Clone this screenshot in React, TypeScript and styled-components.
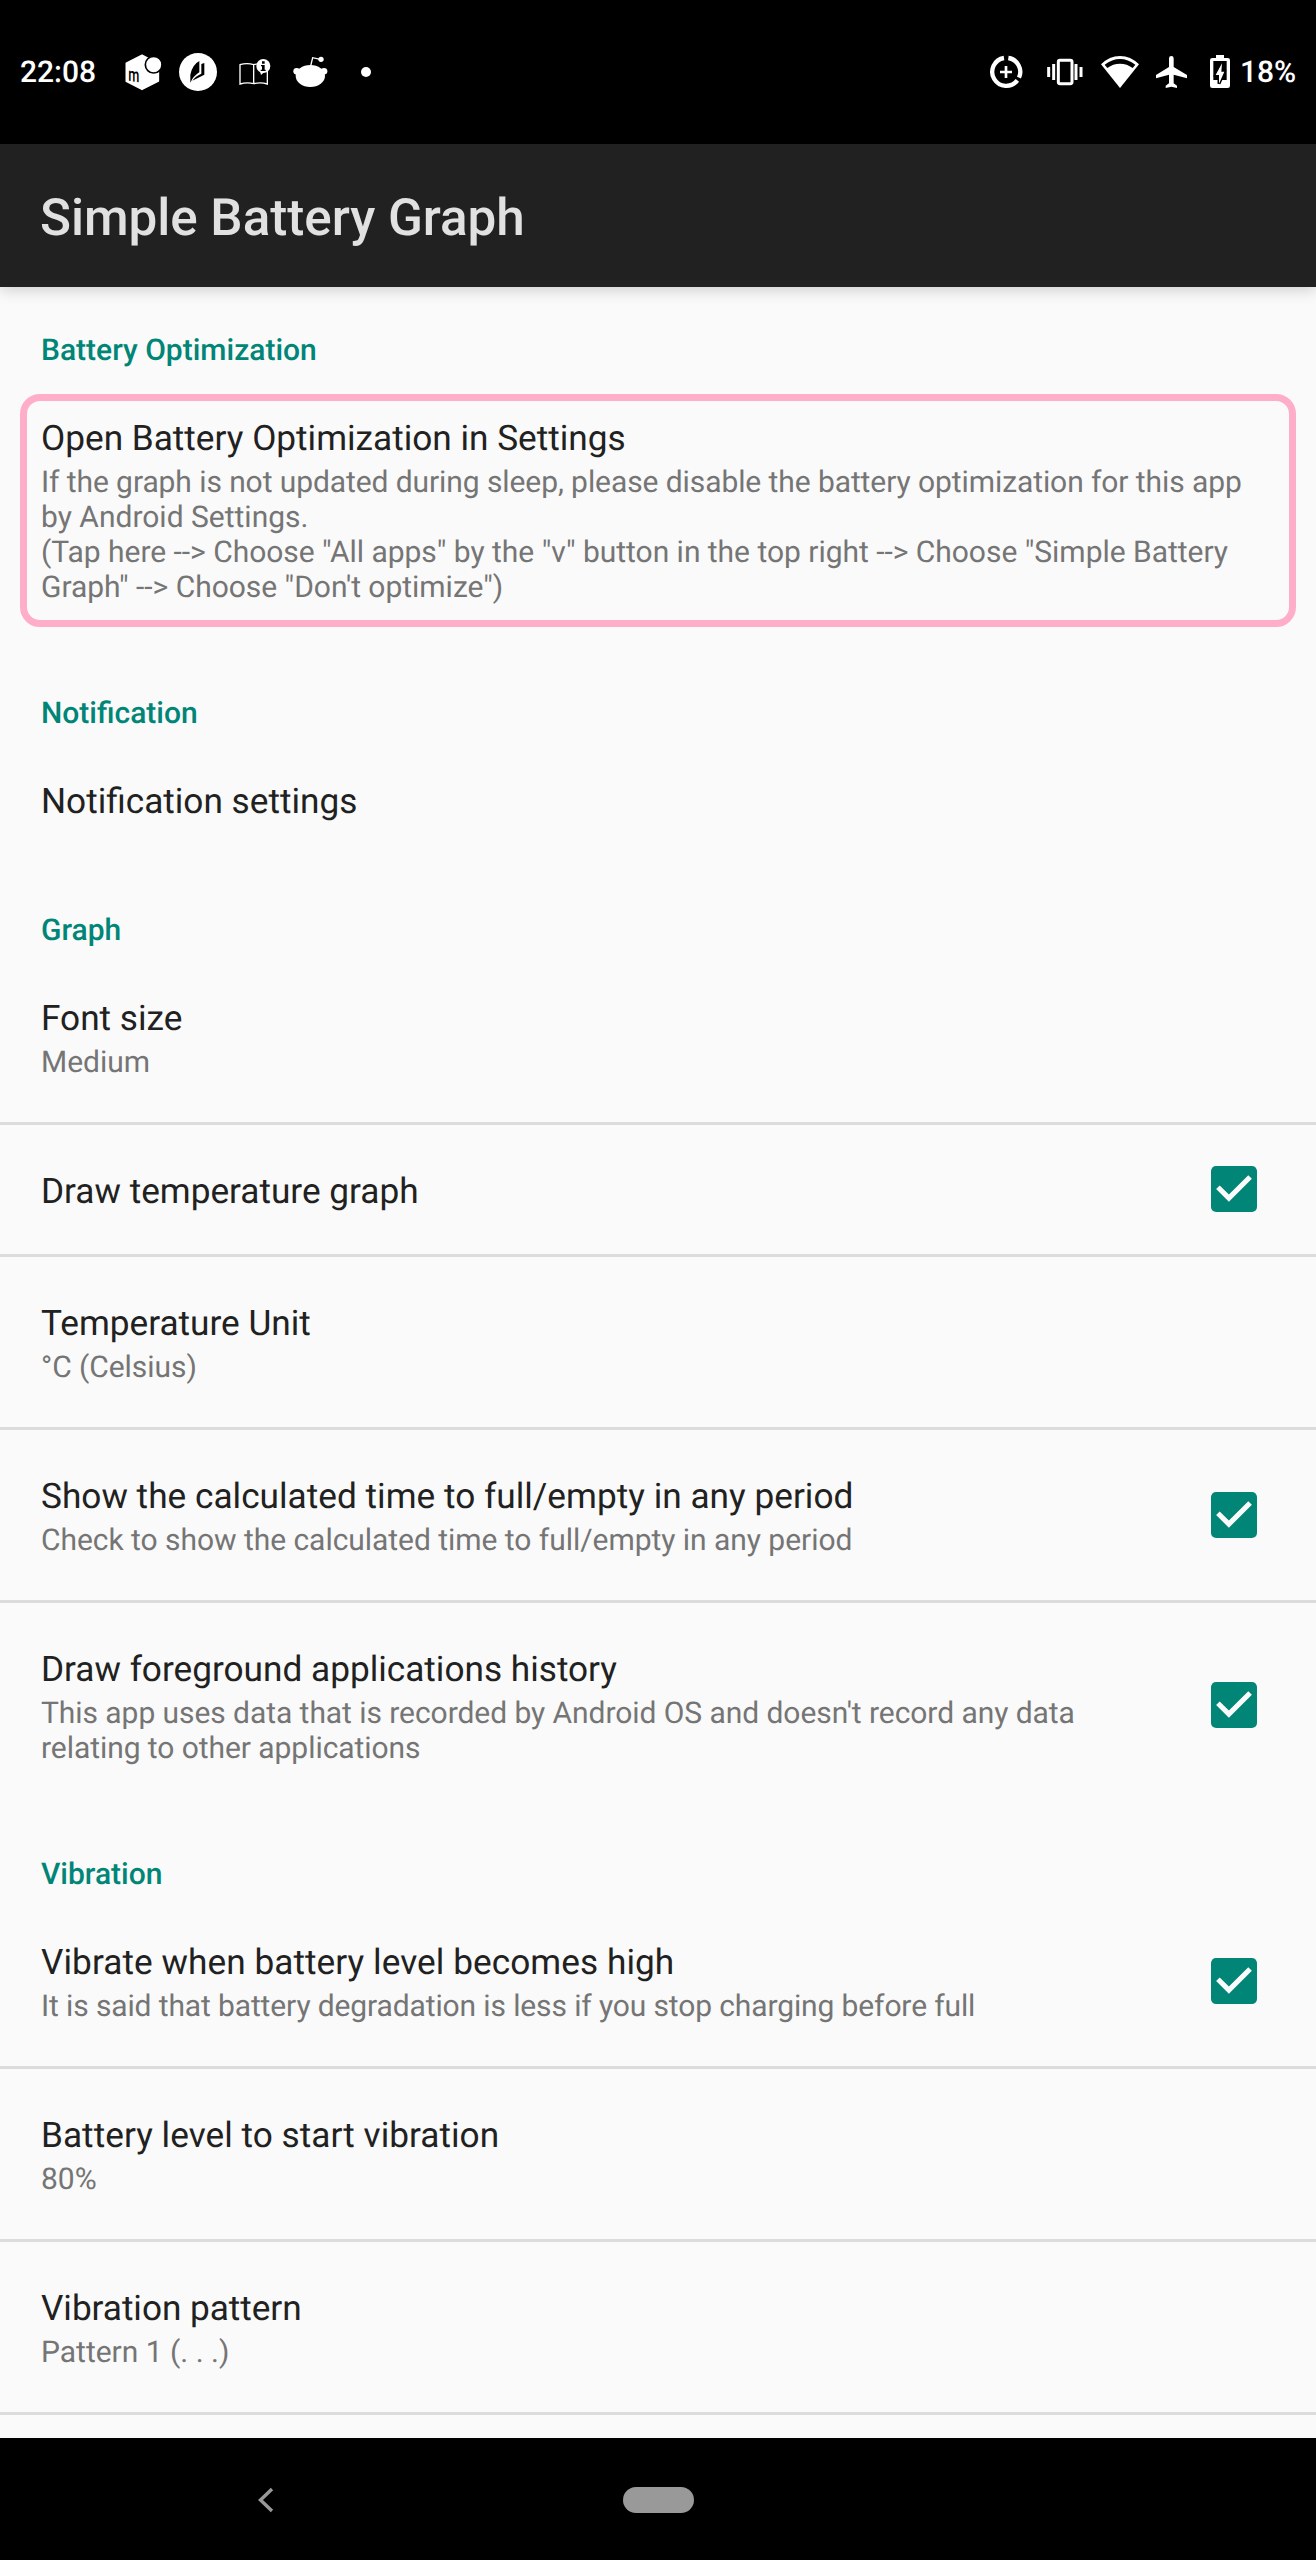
import React from "react";
import styled, { createGlobalStyle } from "styled-components";

const GlobalStyle = createGlobalStyle`
  * { box-sizing: border-box; }
  body {
    margin: 0;
    background: #fafafa;
    font-family: Roboto, "Liberation Sans", sans-serif;
    text-rendering: geometricPrecision;
  }
`;

const Screen = styled.div`
  width: 1316px;
  height: 2560px;
  display: flex;
  flex-direction: column;
  overflow: hidden;
  background: #fafafa;
`;

const StatusBar = styled.header`
  flex: none;
  height: 144px;
  display: flex;
  align-items: center;
  justify-content: space-between;
  padding: 0 20px;
  background: #000;
  color: #fff;
`;

const StatusGroup = styled.div`
  display: flex;
  align-items: center;
`;

const StatusText = styled.span<{ $width: number; $gap?: number }>`
  width: ${(p) => p.$width}px;
  margin-left: ${(p) => p.$gap ?? 0}px;
  padding-top: 2px;
  font-size: 30px;
  line-height: 36px;
  font-weight: 500;
  white-space: nowrap;
`;

const StatusIcon = styled.svg<{ $w: number; $gap: number }>`
  display: block;
  flex: none;
  width: ${(p) => p.$w}px;
  height: 40px;
  margin-left: ${(p) => p.$gap}px;
`;

const AppBar = styled.div`
  flex: none;
  height: 143px;
  display: flex;
  align-items: center;
  padding: 5px 40px 0;
  background: #212121;
  box-shadow: 0 3px 14px rgba(0, 0, 0, 0.18);
  z-index: 1;
`;

const AppTitle = styled.h1`
  margin: 0;
  font-size: 51.2px;
  line-height: 60px;
  font-weight: 500;
  letter-spacing: -0.03px;
  color: #e1e1e1;
`;

const Content = styled.main`
  flex: 1;
  min-height: 0;
  overflow: hidden;
`;

const SectionHeading = styled.h2<{ $first?: boolean }>`
  margin: 0;
  padding: ${(p) => (p.$first ? 46 : 49)}px 41px 4px;
  font-size: 30px;
  line-height: 35px;
  font-weight: 500;
  color: #008577;
`;

const Row = styled.div<{ $divided?: boolean }>`
  display: flex;
  align-items: center;
  justify-content: space-between;
  padding: 0 59px 0 41px;
  border-bottom: ${(p) => (p.$divided ? "3px solid #dcdcdc" : "none")};
`;

const RowText = styled.div`
  padding: 45px 0 42px;
`;

const HighlightRow = styled.div`
  margin: 22px 20px 20px;
  padding: 16px 14px 15px;
  border: 7px solid #ffaec9;
  border-radius: 20px;
`;

const Title = styled.div<{ $tracking?: number }>`
  font-size: 35.2px;
  line-height: 42px;
  letter-spacing: ${(p) => p.$tracking ?? 0}px;
  color: #212121;
  white-space: nowrap;
`;

const Summary = styled.div`
  margin-top: 6px;
  font-size: 30px;
  line-height: 35px;
  color: #757575;
`;

const SummaryLine = styled.div<{ $tracking?: number }>`
  letter-spacing: ${(p) => p.$tracking ?? 0}px;
  white-space: nowrap;
`;

const CheckIcon = styled.svg`
  flex: none;
  display: block;
  width: 46px;
  height: 46px;
  margin-bottom: 1px;
`;

const NavBar = styled.nav`
  flex: none;
  height: 122px;
  display: flex;
  align-items: center;
  padding: 1px 0 0 256px;
  background: #000;
`;

const BackIcon = styled.svg`
  display: block;
  width: 20px;
  height: 30px;
`;

const HomePill = styled.div`
  width: 71px;
  height: 26px;
  margin-left: 347px;
  border-radius: 13px;
  background: #999;
`;

function Checkbox() {
  return (
    <CheckIcon viewBox="3 3 18 18">
      <rect x="3" y="3" width="18" height="18" rx="2" fill="#008577" />
      <path d="M10 17l-5-5 1.41-1.41L10 14.17l7.59-7.59L19 8z" fill="#fafafa" />
    </CheckIcon>
  );
}

type PreferenceProps = {
  title: string;
  titleTracking?: number;
  summary?: string[];
  summaryTracking?: number;
  checked?: boolean;
  divided?: boolean;
};

function Preference({ title, titleTracking, summary, summaryTracking, checked, divided }: PreferenceProps) {
  return (
    <Row $divided={divided}>
      <RowText>
        <Title $tracking={titleTracking}>{title}</Title>
        {summary && (
          <Summary>
            {summary.map((line) => (
              <SummaryLine key={line} $tracking={summaryTracking}>{line}</SummaryLine>
            ))}
          </Summary>
        )}
      </RowText>
      {checked && <Checkbox />}
    </Row>
  );
}

function NotificationIcons() {
  return (
    <>
      <StatusIcon $w={38} $gap={25} viewBox="374 66 114 120">
        <path d="M425 76L474 101V153L425 178L378 154V100Z" fill="#fff" stroke="#fff" strokeWidth="5" strokeLinejoin="round" />
        <circle cx="460" cy="104" r="25" fill="#fff" stroke="#000" strokeWidth="5" />
        <text fontSize="58" fontWeight="500" fontFamily="Roboto" transform="translate(384 152) skewY(8) scale(.66 1)">m</text>
      </StatusIcon>
      <StatusIcon $w={38} $gap={16} viewBox="537 66 114 120">
        <circle cx="594" cy="126" r="57" fill="#fff" />
        <path d="M571 158V134Q577 104 598 93V127Q580 138 571 158Z" />
        <path d="M604 102L613 99V134L577 152Q586 139 604 131Z" />
      </StatusIcon>
      <StatusIcon $w={32} $gap={22} viewBox="716 66 96 120">
        <path d="M719 104Q740 98 760 104Q781 98 801 104V162Q781 156 760 161Q740 156 719 162ZM760 104V161" fill="none" stroke="#fff" strokeWidth="4" />
        <path d="M779 123L782 135L793 125Z" fill="#fff" />
        <circle cx="789" cy="108" r="21" fill="#fff" />
        <path d="M785 94h8v7h-8zM782 105h11v14h3v4h-15v-4h4v-10h-3z" />
      </StatusIcon>
      <StatusIcon $w={35} $gap={22} viewBox="878 66 105 120">
        <ellipse cx="930" cy="138" rx="44" ry="33" fill="#fff" />
        <circle cx="889" cy="124" r="10" fill="#fff" />
        <circle cx="971" cy="124" r="10" fill="#fff" />
        <circle cx="962" cy="88" r="8" fill="#fff" />
        <path d="M931 108L937 83L960 88" fill="none" stroke="#fff" strokeWidth="4" />
      </StatusIcon>
      <StatusIcon $w={10} $gap={33} viewBox="1083 66 30 120">
        <circle cx="1098" cy="126" r="15" fill="#fff" />
      </StatusIcon>
    </>
  );
}

function SystemIcons() {
  return (
    <>
      <StatusIcon $w={34} $gap={0} viewBox="87 66 102 120">
        <path d="M132 84A42 42 0 1 0 172 151M145 84A42 42 0 0 1 177 143" fill="none" stroke="#fff" strokeWidth="13" />
        <path d="M138 108V144M120 126H156" stroke="#fff" strokeWidth="8" />
      </StatusIcon>
      <StatusIcon $w={36} $gap={24} viewBox="261 66 108 120">
        <rect x="295" y="91" width="41" height="70" rx="5" fill="none" stroke="#fff" strokeWidth="9" />
        <path d="M266 111V141M281 102V150M348 102V150M363 111V141" stroke="#fff" strokeWidth="9" />
      </StatusIcon>
      <StatusIcon $w={38} $gap={18} viewBox="423 66 114 120">
        <path d="M480 174L423 103Q448 78 480 78T537 103Z" fill="#fff" />
        <path d="M434 104Q456 87 480 87T526 104L518 114Q501 101 480 101T442 114Z" />
      </StatusIcon>
      <StatusIcon $w={31} $gap={17} viewBox="588 66 93 120">
        <path d="M681 145V135L641 111V85a7 7 0 0 0-14 0V111L588 135V145L627 134V160L617 167V174L634 170L651 174V167L641 160V134Z" fill="#fff" />
      </StatusIcon>
      <StatusIcon $w={20} $gap={23} viewBox="750 66 60 120">
        <path d="M768 75H792V84H803Q810 84 810 91V167Q810 174 803 174H757Q750 174 750 167V91Q750 84 757 84H768Z" fill="#fff" />
        <path d="M760 93H800V150H760Z" />
        <path d="M786 100L767 135H777V161L793 125H784Z" fill="#fff" stroke="#000" strokeWidth="9" paintOrder="stroke" />
      </StatusIcon>
    </>
  );
}

export default function App() {
  return (
    <>
      <GlobalStyle />
      <Screen>
        <StatusBar>
          <StatusGroup>
            <StatusText $width={80}>22:08</StatusText>
            <NotificationIcons />
          </StatusGroup>
          <StatusGroup>
            <SystemIcons />
            <StatusText $width={56} $gap={10}>18%</StatusText>
          </StatusGroup>
        </StatusBar>
        <AppBar>
          <AppTitle>Simple Battery Graph</AppTitle>
        </AppBar>
        <Content>
          <SectionHeading $first>Battery Optimization</SectionHeading>
          <HighlightRow>
            <Title>Open Battery Optimization in Settings</Title>
            <Summary>
              <SummaryLine $tracking={-0.085}>
                If the graph is not updated during sleep, please disable the battery optimization for this app
              </SummaryLine>
              <SummaryLine>by Android Settings.</SummaryLine>
              <SummaryLine $tracking={-0.025}>
                {'(Tap here --> Choose "All apps" by the "v" button in the top right --> Choose "Simple Battery'}
              </SummaryLine>
              <SummaryLine $tracking={-0.025}>{'Graph" --> Choose "Don\'t optimize")'}</SummaryLine>
            </Summary>
          </HighlightRow>

          <SectionHeading>Notification</SectionHeading>
          <Preference title="Notification settings" />

          <SectionHeading>Graph</SectionHeading>
          <Preference title="Font size" summary={["Medium"]} divided />
          <Preference title="Draw temperature graph" checked divided />
          <Preference title="Temperature Unit" summary={["°C (Celsius)"]} summaryTracking={-0.05} divided />
          <Preference
            title="Show the calculated time to full/empty in any period"
            titleTracking={0.02}
            summary={["Check to show the calculated time to full/empty in any period"]}
            summaryTracking={-0.04}
            checked
            divided
          />
          <Preference
            title="Draw foreground applications history"
            summary={[
              "This app uses data that is recorded by Android OS and doesn't record any data",
              "relating to other applications",
            ]}
            summaryTracking={-0.06}
            checked
          />

          <SectionHeading>Vibration</SectionHeading>
          <Preference
            title="Vibrate when battery level becomes high"
            titleTracking={0.06}
            summary={["It is said that battery degradation is less if you stop charging before full"]}
            summaryTracking={-0.125}
            checked
            divided
          />
          <Preference title="Battery level to start vibration" titleTracking={0.03} summary={["80%"]} divided />
          <Preference title="Vibration pattern" titleTracking={-0.04} summary={["Pattern 1 (. . .)"]} divided />
        </Content>
        <NavBar>
          <BackIcon viewBox="0 0 20 30">
            <path d="M16 4L4.5 15L16 26" fill="none" stroke="#999" strokeWidth="3.4" />
          </BackIcon>
          <HomePill />
        </NavBar>
      </Screen>
    </>
  );
}
